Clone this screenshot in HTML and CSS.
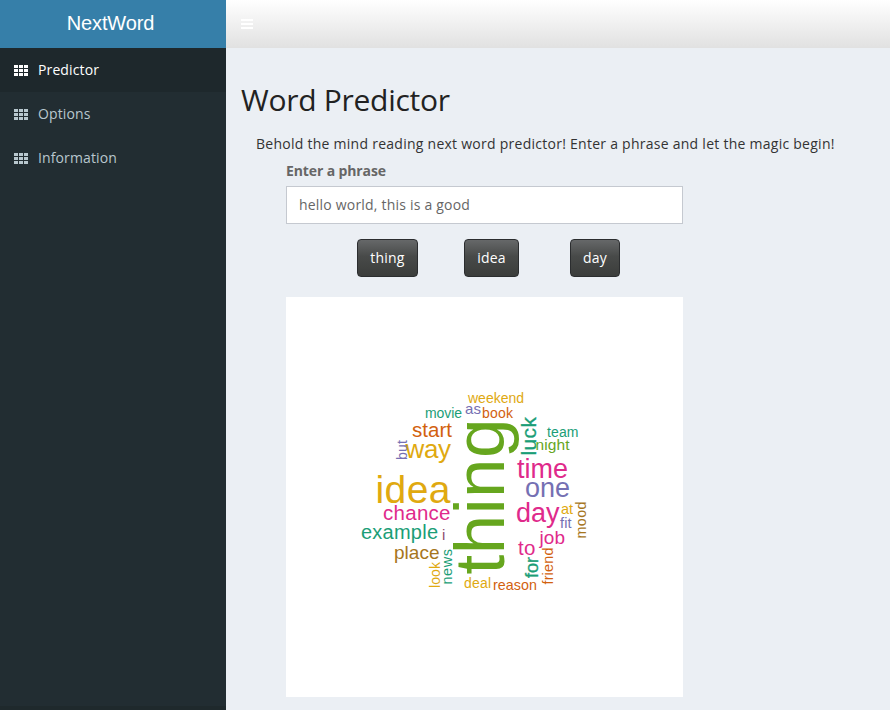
FILE: index.html
```html
<!DOCTYPE html>
<html lang="en">
<head>
<meta charset="utf-8">
<title>NextWord</title>
<link rel="stylesheet" href="styles.css">
</head>
<body>
<svg class="defs" width="0" height="0"><defs><symbol id="grid" viewBox="0 0 14 11"><path d="M0 0h4v3H0zM5 0h4v3H5zM10 0h4v3h-4zM0 4h4v3H0zM5 4h4v3H5zM10 4h4v3h-4zM0 8h4v3H0zM5 8h4v3H5zM10 8h4v3h-4z"/></symbol></defs></svg>
<div class="app">
  <aside class="sidebar">
    <div class="logo">NextWord</div>
    <nav class="menu">
      <a class="item active"><svg class="icon"><use href="#grid"/></svg><span>Predictor</span></a>
      <a class="item"><svg class="icon"><use href="#grid"/></svg><span>Options</span></a>
      <a class="item"><svg class="icon"><use href="#grid"/></svg><span>Information</span></a>
    </nav>
  </aside>
  <div class="main">
    <header class="navbar"><svg class="bars" viewBox="0 0 12 10"><path d="M0 0h12v2H0zM0 4h12v2H0zM0 8h12v2H0z"/></svg></header>
    <main class="content">
      <h1>Word Predictor</h1>
      <p class="intro">Behold the mind reading next word predictor! Enter a phrase and let the magic begin!</p>
      <div class="panel">
        <label for="phrase">Enter a phrase</label>
        <input id="phrase" type="text" value="hello world, this is a good">
        <div class="buttons"><button>thing</button><button>idea</button><button>day</button></div>
        <svg class="cloud" viewBox="286 297 397 400">
          <g class="gold">
            <text x="468" y="403" font-size="14" textLength="56">weekend</text>
            <text x="405.500" y="458" font-size="26" textLength="45.500">way</text>
            <text x="375.500" y="503" font-size="39" textLength="75">idea</text>
            <text x="464" y="588" font-size="14" textLength="27">deal</text>
            <text x="561" y="514" font-size="14.500" textLength="12">at</text>
            <text transform="translate(440 588) rotate(-90)" font-size="14" textLength="26">look</text>
          </g>
          <g class="teal">
            <text x="425" y="418" font-size="14" textLength="37">movie</text>
            <text x="361" y="539" font-size="20" textLength="77">example</text>
            <text x="547" y="437" font-size="14" textLength="31.500">team</text>
            <text transform="translate(536 455.500) rotate(-90)" font-size="21" textLength="38.500" class="heavy">luck</text>
            <text transform="translate(452 584.500) rotate(-90)" font-size="14.500" textLength="35.500">news</text>
            <text transform="translate(538 578) rotate(-90)" font-size="18" textLength="21" class="heavy">for</text>
          </g>
          <g class="purple">
            <text x="465" y="414" font-size="15" textLength="16">as</text>
            <text x="525" y="497" font-size="27" textLength="45">one</text>
            <text x="560" y="528" font-size="14.500" textLength="11.500">fit</text>
            <text transform="translate(407 460) rotate(-90)" font-size="14" textLength="20">but</text>
          </g>
          <g class="orange">
            <text x="482" y="418" font-size="14" textLength="31">book</text>
            <text x="412" y="437" font-size="20.500" textLength="40">start</text>
            <text x="493" y="590" font-size="14.300" textLength="44">reason</text>
            <text transform="translate(553 584.500) rotate(-90)" font-size="14.500" textLength="37">friend</text>
          </g>
          <g class="pink">
            <text x="383" y="520" font-size="20.500" textLength="67.500">chance</text>
            <text x="517" y="478" font-size="27" textLength="51">time</text>
            <text x="516" y="522" font-size="27" textLength="43.500">day</text>
            <text x="539.500" y="544" font-size="19" textLength="25.500">job</text>
            <text x="518" y="555" font-size="20.500" textLength="17.500">to</text>
          </g>
          <g class="brown">
            <text x="394" y="559" font-size="19" textLength="45.500">place</text>
            <text transform="translate(586 538.500) rotate(-90)" font-size="14.300" textLength="37">mood</text>
          </g>
          <g class="green">
            <text x="535.500" y="450" font-size="15.500" textLength="34">night</text>
            <text transform="translate(504 574.500) rotate(-90)" font-size="71" textLength="156">thing</text>
          </g>
          <text class="plum" x="442" y="540" font-size="15">i</text>
        </svg>
      </div>
    </main>
  </div>
</div>
</body>
</html>
```
FILE: styles.css
```css
* { box-sizing: border-box; }
body { margin: 0; font: 14px/20px "Open Sans", sans-serif; color: #333; background: #ebeff4; }
.defs { display: none; }
.app { display: flex; height: 710px; overflow: hidden; }
.sidebar { width: 226px; flex: none; background: #222d32; border-bottom: 4px solid #1f292c; }
.logo { height: 48px; background: #367fa9; color: #fff; text-align: center; padding-right: 5px; font: 20px/47px "Liberation Sans", Arial, sans-serif; letter-spacing: -.1px; }
.item { display: flex; align-items: center; height: 44px; padding: 0 14px; gap: 10px; color: #b8c7ce; letter-spacing: .12px; }
.item.active { background: #1e282c; color: #fff; }
.icon { width: 14px; height: 11px; fill: currentColor; }
.main { flex: 1; min-width: 0; }
.navbar { height: 48px; display: flex; align-items: center; padding-left: 15px; background: linear-gradient(#fff, #e1e1e1); }
.bars { width: 12px; height: 10px; fill: #fff; }
.content { padding: 33px 15px 0; }
h1 { margin: 0; font-size: 30px; line-height: 38px; font-weight: 400; color: #222; letter-spacing: -.28px; }
.intro { margin: 15px 0 0 15px; white-space: nowrap; letter-spacing: .26px; }
.panel { width: 397px; margin: 7px 0 0 45px; }
label { display: block; font-weight: 700; color: #666; margin-bottom: 5px; letter-spacing: -.12px; }
input { display: block; width: 100%; height: 38px; border: 1px solid #c5c9d0; border-radius: 0; padding: 0 12px 2px; background: #fff; color: #666; font: inherit; letter-spacing: .2px; }
.buttons { display: flex; margin: 15px 0 20px 71px; height: 38px; }
button { height: 38px; padding: 0 11px; border: 1px solid #2b2d2f; border-radius: 4px; font: inherit; letter-spacing: .2px; color: #fff; background: linear-gradient(#666869, #484a49 45%, #3b3d3b); }
button:nth-child(1) { width: 61px; margin-right: 46px; }
button:nth-child(2) { width: 55px; margin-right: 51px; }
button:nth-child(3) { width: 50px; }
.cloud { display: block; width: 397px; height: 400px; background: #fff; font-family: "Liberation Sans", Arial, sans-serif; }
.gold { fill: #e0a910; }
.teal { fill: #1b9e77; }
.purple { fill: #7570b3; }
.orange { fill: #d2610e; }
.pink { fill: #df2a8b; }
.brown { fill: #a6761d; }
.green { fill: #66a61e; }
.plum { fill: #8c5070; }
.heavy { stroke: #1b9e77; stroke-width: .3px; }
```
